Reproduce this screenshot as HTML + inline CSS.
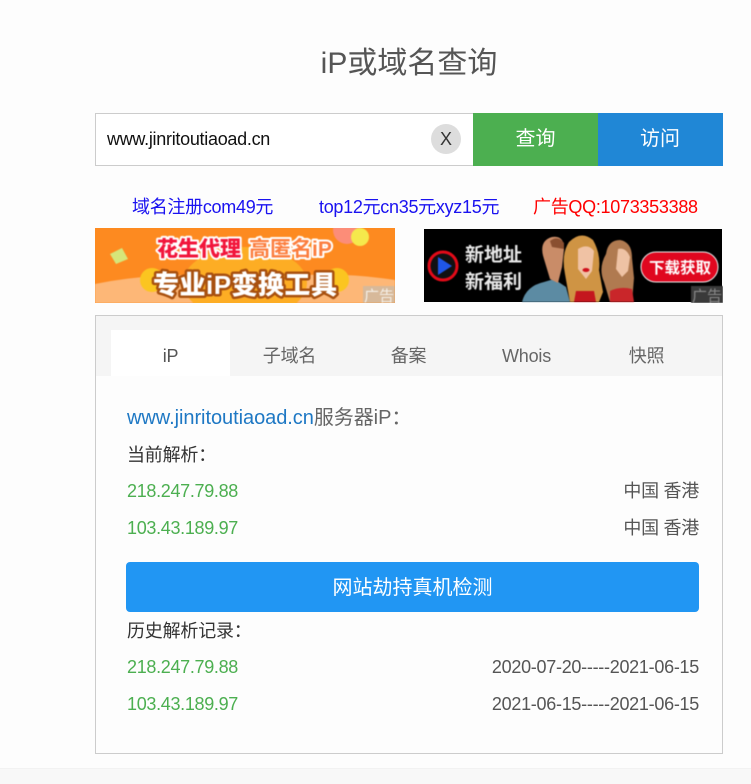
<!DOCTYPE html>
<html lang="zh">
<head>
<meta charset="utf-8">
<title>iP或域名查询</title>
<style>
html,body{margin:0;padding:0;width:751px;height:784px;overflow:hidden;background:#fdfdfd;font-family:"Liberation Sans","Noto Sans CJK SC",sans-serif;}
.a{position:absolute;white-space:nowrap;}
.foot{left:0;top:768px;width:751px;height:16px;background:#f8f8f8;border-top:1px solid #f2f2f2;box-sizing:border-box;}
.box{left:95px;top:315px;width:628px;height:439px;border:1px solid #ccc;box-sizing:border-box;background:#fdfdfd;}
.g{color:#4caf50;font-size:18px;line-height:24px;left:127px;letter-spacing:-.32px;}
.r{color:#555;font-size:18px;line-height:24px;right:52px;letter-spacing:-.28px;}
.k{color:#333;font-size:18px;line-height:24px;left:127px;letter-spacing:-.2px;}
.t{color:#666;font-size:18px;line-height:24px;text-align:center;width:119px;top:344px;letter-spacing:-.2px;}
.p{top:195px;font-size:18px;line-height:24px;letter-spacing:-.29px;}
</style>
</head>
<body>
<div class="a foot"></div>
<div class="a" style="left:0;width:678px;margin-left:70px;top:44px;text-align:center;font-size:30px;line-height:40px;color:#555;">iP或域名查询</div>

<div class="a" style="left:95px;top:113px;width:378px;height:53px;border:1px solid #ccc;border-right:0;box-sizing:border-box;background:#fff;"></div>
<div class="a" style="left:107px;top:127px;font-size:18px;line-height:24px;color:#111;letter-spacing:-.29px;">www.jinritoutiaoad.cn</div>
<div class="a" style="left:431px;top:124px;width:30px;height:30px;border-radius:50%;background:#ddd;color:#333;font-size:18px;line-height:30px;text-align:center;">X</div>
<div class="a" style="left:473px;top:113px;width:125px;height:53px;background:#4caf50;color:#fff;font-size:20px;line-height:52px;text-align:center;">查询</div>
<div class="a" style="left:598px;top:113px;width:124px;height:53px;padding-right:1px;background:#2087d6;color:#fff;font-size:20px;line-height:52px;text-align:center;">访问</div>

<div class="a p" style="left:132px;color:#1a12f0;">域名注册com49元</div>
<div class="a p" style="left:319px;color:#1a12f0;">top12元cn35元xyz15元</div>
<div class="a p" style="left:533px;color:#f00;">广告QQ:1073353388</div>

<svg class="a" style="left:95px;top:228px;" width="300" height="75" viewBox="0 0 300 75">
<rect width="300" height="75" fill="#fd8a20"/>
<g style="filter:blur(.4px)">
<rect width="300" height="75" fill="#fd8a20"/>
<path d="M0 56q60-12 120-8h70q60-4 110 4v23H0z" fill="#fdb777"/>
<ellipse cx="150" cy="55" rx="62" ry="36" fill="#fdad24"/>
<circle cx="57" cy="52" r="12" fill="#fbc520"/>
<circle cx="242" cy="52" r="12" fill="#fbc520"/>
<circle cx="252" cy="2" r="14" fill="#fc8d78"/>
<circle cx="265" cy="9" r="9" fill="#f5e94c"/>
<path d="M15 26l12-6 6 11-12 5z" fill="#d6e67a"/>
<text x="62" y="28" font-family="Liberation Sans,Noto Sans CJK SC,sans-serif" font-weight="900" font-size="21" fill="#f2153b" stroke="#fff" stroke-width="4" paint-order="stroke" stroke-linejoin="round">花生代理</text>
<text x="154" y="28" font-family="Liberation Sans,Noto Sans CJK SC,sans-serif" font-weight="700" font-size="21" fill="#fc7e3e" stroke="#fff" stroke-width="4" paint-order="stroke" stroke-linejoin="round">高匿名iP</text>
<text x="58" y="66" font-family="Liberation Sans,Noto Sans CJK SC,sans-serif" font-weight="900" font-size="26" fill="#fff" stroke="#a8500f" stroke-width="5" paint-order="stroke" stroke-linejoin="round" textLength="184">专业iP变换工具</text>
<rect x="268" y="58" width="32" height="17" fill="#c9b9a6" opacity=".75"/>
<text x="269" y="73" font-family="Liberation Sans,Noto Sans CJK SC,sans-serif" font-size="15" fill="#f5f0e8">广告</text>
</g>
</svg>

<svg class="a" style="left:424px;top:229px;" width="299" height="74" viewBox="0 0 299 74">
<rect width="298" height="73" fill="#000"/>
<g style="filter:blur(.4px)">
<circle cx="19" cy="37" r="14" fill="#111" stroke="#e30a18" stroke-width="3"/>
<path d="M14 28l14 9-14 9z" fill="#1f56e6"/>
<text x="41" y="32" font-family="Liberation Sans,Noto Sans CJK SC,sans-serif" font-weight="700" font-size="19" fill="#e8e8e8">新地址</text>
<text x="41" y="59" font-family="Liberation Sans,Noto Sans CJK SC,sans-serif" font-weight="700" font-size="19" fill="#e8e8e8">新福利</text>
<path d="M98 73q4-16 22-20l10-3 12 8 4 15z" fill="#5c8ba3"/>
<path d="M120 30q-6-18 8-22 12-2 12 12l-2 18-4 16-8-4z" fill="#c98c68"/>
<path d="M126 12q8-6 14 2l0 6-12-2z" fill="#8a4f30"/>
<path d="M146 73l-5-28q-4-20 4-32 12-12 24-2 8 14 6 30l4 22-4 10z" fill="#cf9444"/>
<path d="M154 20q10-6 16 2l-2 20-6 8-8-10z" fill="#f0c2a4"/>
<path d="M152 62h18l2 11h-22z" fill="#c4161e"/>
<ellipse cx="162" cy="41" rx="3.5" ry="2" fill="#d0101c"/>
<g transform="translate(10 0)">
<path d="M176 73l-6-20q-6-14 2-28 2-14 14-14 12 2 12 18l2 20-2 24z" fill="#b07a50"/>
<path d="M184 20q8-2 12 8l-2 14-6 6-6-8z" fill="#eec2a4"/>
<path d="M176 62q10-5 22-2l2 13h-24z" fill="#c9262a"/>
</g>
<rect x="217" y="23" width="77" height="30" rx="15" fill="#e0071f" stroke="#eee" stroke-width="1"/>
<text x="225" y="44" font-family="Liberation Sans,Noto Sans CJK SC,sans-serif" font-weight="700" font-size="15.5" fill="#fff">下载获取</text>
<rect x="267" y="57" width="32" height="17" fill="#3a3a3a"/>
<text x="268" y="72" font-family="Liberation Sans,Noto Sans CJK SC,sans-serif" font-size="15" fill="#8a8a8a">广告</text>
</g>
</svg>

<div class="a box"></div>
<div class="a" style="left:96px;top:316px;width:626px;height:60px;background:#f5f5f5;"></div>
<div class="a" style="left:111px;top:330px;width:119px;height:46px;background:#fff;"></div>
<div class="a t" style="left:111px;color:#555;">iP</div>
<div class="a t" style="left:230px;">子域名</div>
<div class="a t" style="left:349px;">备案</div>
<div class="a t" style="left:467px;">Whois</div>
<div class="a t" style="left:587px;">快照</div>

<div class="a" style="left:127px;top:405px;font-size:20px;line-height:26px;color:#666;letter-spacing:-.05px;"><span style="color:#1e78c4;">www.jinritoutiaoad.cn</span>服务器iP：</div>
<div class="a k" style="top:443px;">当前解析：</div>
<div class="a g" style="top:479px;">218.247.79.88</div>
<div class="a r" style="top:479px;">中国 香港</div>
<div class="a g" style="top:516px;">103.43.189.97</div>
<div class="a r" style="top:516px;">中国 香港</div>
<div class="a" style="left:126px;top:562px;width:573px;height:50px;background:#2196f3;border-radius:4px;color:#fff;font-size:20px;line-height:52px;text-align:center;">网站劫持真机检测</div>
<div class="a k" style="top:619px;">历史解析记录：</div>
<div class="a g" style="top:655px;">218.247.79.88</div>
<div class="a r" style="top:655px;">2020-07-20-----2021-06-15</div>
<div class="a g" style="top:692px;">103.43.189.97</div>
<div class="a r" style="top:692px;">2021-06-15-----2021-06-15</div>
</body>
</html>
